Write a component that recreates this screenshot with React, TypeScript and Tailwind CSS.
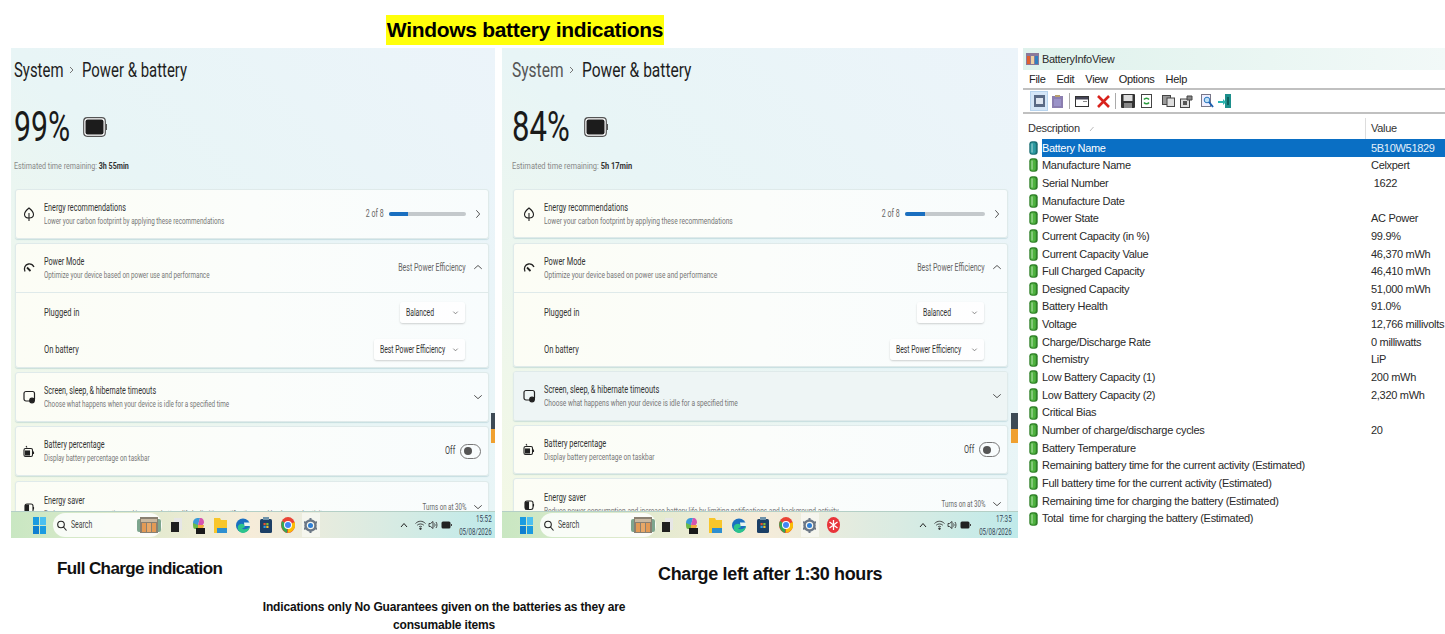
import type { ReactNode } from "react";

const face = "font-['Roboto',sans-serif]";

const infoRows: [string, string][] = [
  ["Battery Name", "5B10W51829"],
  ["Manufacture Name", "Celxpert"],
  ["Serial Number", "\u00a01622"],
  ["Manufacture Date", ""],
  ["Power State", "AC Power"],
  ["Current Capacity (in %)", "99.9%"],
  ["Current Capacity Value", "46,370 mWh"],
  ["Full Charged Capacity", "46,410 mWh"],
  ["Designed Capacity", "51,000 mWh"],
  ["Battery Health", "91.0%"],
  ["Voltage", "12,766 millivolts"],
  ["Charge/Discharge Rate", "0 milliwatts"],
  ["Chemistry", "LiP"],
  ["Low Battery Capacity (1)", "200 mWh"],
  ["Low Battery Capacity (2)", "2,320 mWh"],
  ["Critical Bias", ""],
  ["Number of charge/discharge cycles", "20"],
  ["Battery Temperature", ""],
  ["Remaining battery time for the current activity (Estimated)", ""],
  ["Full battery time for the current activity (Estimated)", ""],
  ["Remaining time for charging the battery (Estimated)", ""],
  ["Total  time for charging the battery (Estimated)", ""],
];

/* the source screenshot is squashed sideways, so text is squeezed to match */
function Sq({ k, right, className = "", children }: { k: string; right?: boolean; className?: string; children: ReactNode }) {
  return (
    <span className={`${face} inline-block whitespace-nowrap ${right ? "origin-right" : "origin-left"} ${k} ${className}`}>
      {children}
    </span>
  );
}

function Chevron({ dir }: { dir: "up" | "down" | "right" }) {
  const d = dir === "up" ? "M1.5 7l4.5-4 4.5 4" : dir === "down" ? "M1.5 4l4.5 4 4.5-4" : "M4 1.5l4 4.5-4 4.5";
  return (
    <svg className="w-[10px] h-[10px] text-[#555]" viewBox="0 0 12 12" fill="none" stroke="currentColor" strokeWidth={1.2}>
      <path d={d} />
    </svg>
  );
}

function BigBattery() {
  return (
    <svg className="w-[24px] h-[20px]" viewBox="0 0 24 20">
      <rect x="0.700" y="0.700" width="21.600" height="18.600" rx="3.500" fill="#fff" stroke="#555" strokeWidth="1.200" />
      <rect x="2.500" y="2.500" width="18" height="15" rx="2" fill="#1c1c1c" />
      <rect x="22.800" y="7" width="1.200" height="6" fill="#555" />
    </svg>
  );
}

function LeafIcon() {
  return (
    <svg className="w-[12px] h-[14px]" viewBox="0 0 12 14" fill="none" stroke="#222" strokeWidth="1.1">
      <path d="M6 1C8.500 3 10.500 5 10.500 7.500C10.500 10 8.500 11 6 11C3.500 11 1.500 10 1.500 7.500C1.500 5 3.500 3 6 1Z" />
      <path d="M6 6v8" />
    </svg>
  );
}

function GaugeIcon() {
  return (
    <svg className="w-[12px] h-[12px]" viewBox="0 0 12 12" fill="none" stroke="#222" strokeWidth="1.3">
      <path d="M2 9.500C.5 6.500 2 2.500 5.500 2C8 1.700 10 3 11 5" />
      <path d="M4 5.500l3.500 3.500" strokeWidth="1.800" />
    </svg>
  );
}

function ScreenIcon() {
  return (
    <svg className="w-[13px] h-[14px]" viewBox="0 0 13 14" fill="none" stroke="#222" strokeWidth="1.2">
      <rect x="1" y="1.500" width="10.500" height="9.500" rx="2" />
      <circle cx="9" cy="10.500" r="2.300" fill="#222" />
    </svg>
  );
}

function PercentIcon() {
  return (
    <svg className="w-[12px] h-[13px]" viewBox="0 0 12 13" fill="none" stroke="#222" strokeWidth="1.100">
      <rect x="1" y="3.500" width="8.500" height="8" rx="1.500" />
      <rect x="2.500" y="6" width="4" height="4" fill="#222" />
      <path d="M3 1l1 1.500M10.500 6.500v2.500" />
    </svg>
  );
}

function SaverIcon() {
  return (
    <svg className="w-[12px] h-[13px]" viewBox="0 0 12 13" fill="none" stroke="#222" strokeWidth="1.100">
      <rect x="2" y="3" width="8" height="8.500" rx="2" />
      <path d="M2.500 4h3v7h-3z" fill="#222" />
      <path d="M10.500 6v2.500" />
    </svg>
  );
}

function Row({ icon, title, sub, right, h, second, tint }: { icon: ReactNode; title: string; sub: string; right: ReactNode; h: string; second?: boolean; tint?: boolean }) {
  return (
    <div className={`flex items-center pr-[4px] ${second ? "pl-[5px]" : "pl-[3px]"} ${h} ${tint ? "bg-[#eef5f5]" : ""}`}>
      <div className="w-[20px] flex justify-center shrink-0">{icon}</div>
      <div className="ml-[5px] flex-1 min-w-0 overflow-hidden">
        <p className="h-[14px] text-[10px] leading-[14px] text-[#333]">
          <Sq k={second ? "scale-x-[0.74]" : "scale-x-[0.72]"}>{title}</Sq>
        </p>
        <p className="h-[12px] text-[8.500px] leading-[12px] text-[#777]">
          <Sq k={second ? "scale-x-[0.775]" : "scale-x-[0.74]"}>{sub}</Sq>
        </p>
      </div>
      <div className="flex items-center shrink-0">{right}</div>
    </div>
  );
}

function ChevBox({ dir }: { dir: "up" | "down" | "right" }) {
  return (
    <span className="w-[12px] ml-[6px] flex justify-center">
      <Chevron dir={dir} />
    </span>
  );
}

function Dropdown({ label, w }: { label: string; w: string }) {
  return (
    <div className={`flex items-center h-[21px] pl-[6px] pr-[6px] rounded-[3px] bg-white/80 shadow-[0_1px_2px_rgba(0,0,0,0.18)] ${w}`}>
      <span className="flex-1 w-0 text-[10px] text-[#333]">
        <Sq k="scale-x-[0.68]">{label}</Sq>
      </span>
      <svg className="w-[7px] h-[7px] shrink-0" viewBox="0 0 8 8" fill="none" stroke="#777" strokeWidth="1">
        <path d="M1.500 3l2.500 2.500L6.500 3" />
      </svg>
    </div>
  );
}

function SubRow({ label, children, second }: { label: string; children: ReactNode; second?: boolean }) {
  return (
    <div className={`h-[21px] flex items-center justify-between pr-[23px] ${second ? "pl-[30px]" : "pl-[28px]"}`}>
      <span className="text-[10.500px] text-[#333]">
        <Sq k="scale-x-[0.72]">{label}</Sq>
      </span>
      {children}
    </div>
  );
}

function Card({ children, className = "" }: { children: ReactNode; className?: string }) {
  return (
    <div className={`rounded-[3px] overflow-hidden bg-linear-to-r from-[#fcfdf5] via-[#fbfdfb] to-[#f8fcfd] border border-[#dfeaea] shadow-[0_1px_1px_rgba(120,170,180,0.3)] ${className}`}>
      {children}
    </div>
  );
}

/* taskbar glyphs */
function WinLogo() {
  return (
    <svg className="w-[13px] h-[17px] shrink-0" viewBox="0 0 13 17">
      <rect x="0" y="0" width="6" height="8" fill="#1b9be0" />
      <rect x="7" y="0" width="6" height="8" fill="#4cc0f0" />
      <rect x="0" y="9" width="6" height="8" fill="#0f7fd0" />
      <rect x="7" y="9" width="6" height="8" fill="#1b9be0" />
    </svg>
  );
}

function PicIcon() {
  return (
    <svg className="w-[24px] h-[18px]" viewBox="0 0 24 18">
      <rect x="0" y="3" width="24" height="13" rx="2" fill="#7da58e" />
      <rect x="3" y="1" width="18" height="16" fill="#8a8071" />
      <rect x="4" y="3" width="16" height="3" fill="#c9b8a0" />
      <rect x="5" y="7" width="4" height="9" fill="#e39a55" />
      <rect x="10" y="7" width="4" height="9" fill="#e8a868" />
      <rect x="15" y="7" width="4" height="9" fill="#e39a55" />
    </svg>
  );
}

function BookIcon() {
  return (
    <svg className="w-[11px] h-[14px]" viewBox="0 0 11 14">
      <rect x="3" y="0" width="8" height="12" fill="#e6e6e6" />
      <rect x="0" y="4" width="8" height="10" fill="#1f1f1f" />
    </svg>
  );
}

function CopilotIcon() {
  return (
    <svg className="w-[13px] h-[17px]" viewBox="0 0 13 17">
      <path d="M1 6C1 2 4 1 6 1L8 1L6 8H1Z" fill="#3a9ad9" />
      <path d="M8 1c3 0 4 2 4 5L10 9 6 8Z" fill="#d553b0" />
      <path d="M1 6l5 2v4H3C1 12 1 9 1 6Z" fill="#6ab94a" />
      <path d="M6 8h6c0 2-1 4-3 4H6Z" fill="#f2a93b" />
      <rect x="4" y="11" width="9" height="6" fill="#1a1a1a" />
    </svg>
  );
}

function FolderIcon() {
  return (
    <svg className="w-[13px] h-[15px]" viewBox="0 0 13 15">
      <path d="M0 0h6l1 2h6v13H0Z" fill="#f8c62a" />
      <rect x="3" y="10" width="10" height="5" fill="#2e8fd0" />
    </svg>
  );
}

function EdgeIcon() {
  return (
    <svg className="w-[14px] h-[15px]" viewBox="0 0 14 15">
      <circle cx="7" cy="7.500" r="7" fill="#1b6fc0" />
      <path d="M14 8C14 11 11 15 7 15C3 15 1 11 2 8C4 5 8 5 9 8C9 10 7 10 6 10C7 12 12 12 14 8Z" fill="#2cc48c" />
      <path d="M8 4.500h6v3.500H8.500Z" fill="#e8f5f0" />
    </svg>
  );
}

function StoreIcon() {
  return (
    <svg className="w-[12px] h-[16px]" viewBox="0 0 12 16">
      <rect x="0" y="2" width="12" height="14" rx="1.500" fill="#1c3f66" />
      <rect x="3" y="0" width="6" height="3" fill="#6f93aa" />
      <rect x="3.500" y="6" width="2.200" height="2.200" fill="#e8532a" />
      <rect x="6.300" y="6" width="2.200" height="2.200" fill="#7cbf3c" />
      <rect x="3.500" y="8.800" width="2.200" height="2.200" fill="#2f9fe0" />
      <rect x="6.300" y="8.800" width="2.200" height="2.200" fill="#f6bd2a" />
    </svg>
  );
}

function ChromeIcon() {
  return (
    <svg className="w-[14px] h-[16px]" viewBox="0 0 14 16">
      <ellipse cx="7" cy="8" rx="7" ry="8" fill="#ea4335" />
      <path d="M7 8L1 4C-1 8 1 14 6 16Z" fill="#34a853" />
      <path d="M7 8l7-3c1 4 0 9-7 11Z" fill="#fbbc05" />
      <circle cx="7" cy="8" r="4" fill="#fff" />
      <circle cx="7" cy="8" r="3" fill="#4285f4" />
    </svg>
  );
}

function GearIcon() {
  return (
    <span className="w-[18px] h-[24px] bg-white/50 flex items-center justify-center">
      <svg className="w-[13px] h-[15px]" viewBox="0 0 13 15">
        <circle cx="6.500" cy="7.500" r="5" fill="none" stroke="#6b7785" strokeWidth="2.500" />
        <path d="M6.500 0v2.500M6.500 12.500V15M0 4l2.200 1.200M10.800 9.800L13 11M0 11l2.200-1.200M10.800 5.200L13 4" stroke="#6b7785" strokeWidth="2" />
        <circle cx="6.500" cy="7.500" r="2.500" fill="#2f7fd6" />
      </svg>
    </span>
  );
}

function RedIcon() {
  return (
    <svg className="w-[13px] h-[16px]" viewBox="0 0 13 16">
      <ellipse cx="6.500" cy="8" rx="6.500" ry="8" fill="#e8343a" />
      <path d="M6.500 3v10M2.500 5l8 6M2.500 11l8-6" stroke="#fff" strokeWidth="1.300" />
    </svg>
  );
}

function TaskSlot({ children, w }: { children: ReactNode; w: string }) {
  return <span className={`h-[26px] flex items-center justify-center shrink-0 ${w}`}>{children}</span>;
}

function Taskbar({ time, second }: { time: string; second?: boolean }) {
  const w = second ? "w-[23.700px]" : "w-[22.400px]";
  return (
    <div className={`h-[27px] flex items-center border-t border-[#b4cfc6] bg-linear-to-r from-[#c9e7c2] via-[#f6ecd9] to-[#bfeaea] ${second ? "pl-[18px] pr-[6px]" : "pl-[22px] pr-[3px]"}`}>
      <WinLogo />
      <div className={`ml-[7px] h-[24px] rounded-full bg-white/85 flex items-center pl-[4px] ${second ? "w-[116px]" : "w-[109px]"}`}>
        <svg className="w-[10px] h-[11px]" viewBox="0 0 10 11" fill="none" stroke="#222" strokeWidth="1.100">
          <circle cx="4" cy="4.500" r="3.300" />
          <path d="M6.500 7l3 3.500" />
        </svg>
        <span className="ml-[4px] w-[21px] text-[10.500px] text-[#444]">
          <Sq k="scale-x-[0.66]">Search</Sq>
        </span>
        <span className="ml-auto mr-[1px]">
          <PicIcon />
        </span>
      </div>
      <div className={`flex items-center ${second ? "ml-0" : "ml-[3px]"}`}>
        <TaskSlot w={w}><BookIcon /></TaskSlot>
        <TaskSlot w={w}><CopilotIcon /></TaskSlot>
        <TaskSlot w={w}><FolderIcon /></TaskSlot>
        <TaskSlot w={w}><EdgeIcon /></TaskSlot>
        <TaskSlot w={w}><StoreIcon /></TaskSlot>
        <TaskSlot w={w}><ChromeIcon /></TaskSlot>
        <TaskSlot w={w}><GearIcon /></TaskSlot>
        {second && <TaskSlot w={w}><RedIcon /></TaskSlot>}
      </div>
      <div className="ml-auto flex items-center gap-[2px]">
        <svg className="w-[8px] h-[6px]" viewBox="0 0 8 6" fill="none" stroke="#222" strokeWidth="1"><path d="M1 5l3-3.500L7 5" /></svg>
        <svg className="ml-[5px] w-[11px] h-[10px]" viewBox="0 0 11 10" fill="none" stroke="#333" strokeWidth="0.900">
          <path d="M.5 3.500C3.500 .5 7.500 .5 10.500 3.500M2.200 5.200C4 3.500 7 3.500 8.800 5.200M4 7C5 6 6 6 7 7" />
          <circle cx="5.500" cy="8.700" r=".8" fill="#333" />
        </svg>
        <svg className="w-[10px] h-[10px]" viewBox="0 0 10 10" fill="none" stroke="#333" strokeWidth="0.900">
          <path d="M1 3.500h1.500L5 1.500v7L2.500 6.500H1ZM6.500 3.500c.7 1 .7 2 0 3M8 2c1.300 2 1.300 4 0 6" />
        </svg>
        <svg className="ml-[1px] w-[11px] h-[8px]" viewBox="0 0 11 8">
          <rect x=".5" y=".5" width="9" height="7" rx="1.500" fill="#222" />
          <rect x="10" y="3" width="1" height="2" fill="#444" />
        </svg>
        <div className={`w-[32px] flex flex-col items-end text-[9.500px] leading-[13px] text-[#345] ${second ? "ml-[7px]" : "ml-[6px]"}`}>
          <Sq right k="scale-x-[0.66]">{time}</Sq>
          <Sq right k="scale-x-[0.64]">05/08/2026</Sq>
        </div>
      </div>
    </div>
  );
}

function SettingsPanel({ percent, remaining, time, second }: { percent: string; remaining: string; time: string; second?: boolean }) {
  const head = second ? "scale-x-[0.74]" : "scale-x-[0.71]";
  const rightK = "scale-x-[0.67]";
  return (
    <section className={`relative flex flex-col shrink-0 h-[490px] overflow-hidden bg-linear-to-tr from-[#f3f8e4] via-[#e8f5f6] to-[#ecf4fa] ${second ? "w-[516px]" : "w-[484px]"}`}>
      <div className="h-[463px] overflow-hidden">
        <div className={`pt-[9px] ${second ? "pl-[10px]" : "pl-[3px]"}`}>
          <div className="flex items-center h-[26px]">
            <span className={`text-[21px] ${second ? "w-[49px] text-[#555]" : "w-[47px] text-[#1e1e1e]"}`}>
              <Sq k={head}>System</Sq>
            </span>
            <svg className="mx-[7px] w-[7px] h-[8px]" viewBox="0 0 7 8" fill="none" stroke="#777" strokeWidth="1"><path d="M2 1l3 3-3 3" /></svg>
            <span className="text-[21px] text-[#1e1e1e]">
              <Sq k={head}>Power &amp; battery</Sq>
            </span>
          </div>
          <div className="mt-[24px] flex items-center h-[40px]">
            <span className={`text-[42px] leading-[40px] text-[#1a1a1a] ${second ? "w-[58px]" : "w-[57px]"}`}>
              <Sq k={second ? "scale-x-[0.74]" : "scale-x-[0.72]"}>{percent}</Sq>
            </span>
            <span className={second ? "ml-[14px]" : "ml-[12px]"}><BigBattery /></span>
          </div>
          <p className="mt-[13px] h-[12px] text-[9.500px] leading-[12px] text-[#888]">
            <Sq k={second ? "scale-x-[0.785]" : "scale-x-[0.75]"}>
              Estimated time remaining: <b className="text-[#333]">{remaining}</b>
            </Sq>
          </p>
        </div>
        <div className={`mt-[17px] flex flex-col gap-[4px] ${second ? "pl-[11px] pr-[10px]" : "pl-[4px] pr-[6px]"}`}>
          <Card>
            <Row
              second={second}
              h={second ? "h-[47px]" : "h-[48px]"}
              icon={<LeafIcon />}
              title="Energy recommendations"
              sub="Lower your carbon footprint by applying these recommendations"
              right={
                <>
                  <span className="text-[10.500px] text-[#666]"><Sq right k={rightK}>2 of 8</Sq></span>
                  <span className={`ml-[5px] h-[4px] rounded-full bg-[#c4c9cc] overflow-hidden ${second ? "w-[80px]" : "w-[77px]"}`}>
                    <span className="block h-full w-[25%] bg-[#1a6fc0]" />
                  </span>
                  <ChevBox dir="right" />
                </>
              }
            />
          </Card>
          <Card className={second ? "mt-[1px]" : ""}>
            <Row
              second={second}
              h="h-[48px]"
              icon={<GaugeIcon />}
              title="Power Mode"
              sub="Optimize your device based on power use and performance"
              right={
                <>
                  <span className="text-[10.500px] text-[#666]"><Sq right k={rightK}>Best Power Efficiency</Sq></span>
                  <ChevBox dir="up" />
                </>
              }
            />
            <div className={`border-t border-[#dfeaea] pt-[9px] flex flex-col gap-[16px] ${second ? "h-[74px]" : "h-[75px]"}`}>
              <SubRow second={second} label="Plugged in">
                <Dropdown label="Balanced" w={second ? "w-[67px]" : "w-[65px]"} />
              </SubRow>
              <SubRow second={second} label="On battery">
                <Dropdown label="Best Power Efficiency" w={second ? "w-[94px]" : "w-[91px]"} />
              </SubRow>
            </div>
          </Card>
          <Card>
            <Row
              second={second}
              h="h-[48px]"
              tint={second}
              icon={<ScreenIcon />}
              title="Screen, sleep, & hibernate timeouts"
              sub="Choose what happens when your device is idle for a specified time"
              right={<ChevBox dir="down" />}
            />
          </Card>
          <Card>
            <Row
              second={second}
              h={second ? "h-[47px]" : "h-[48px]"}
              icon={<PercentIcon />}
              title="Battery percentage"
              sub="Display battery percentage on taskbar"
              right={
                <>
                  <span className="text-[11px] text-[#444]"><Sq right k={rightK}>Off</Sq></span>
                  <span className="ml-[5px] mr-[3px] w-[21px] h-[15px] rounded-full border border-[#777] flex items-center pl-[3px]">
                    <span className="w-[8px] h-[8px] rounded-full bg-[#555]" />
                  </span>
                </>
              }
            />
          </Card>
          <Card className={second ? "" : "mt-[1px]"}>
            <Row
              second={second}
              h="h-[50px]"
              icon={<SaverIcon />}
              title="Energy saver"
              sub="Reduce power consumption and increase battery life by limiting notifications and background activity"
              right={
                <>
                  <span className="text-[9.500px] text-[#666]"><Sq right k="scale-x-[0.65]">Turns on at 30%</Sq></span>
                  <ChevBox dir="down" />
                </>
              }
            />
          </Card>
        </div>
      </div>
      <Taskbar time={time} second={second} />
      {/* sliver of another window on the right edge */}
      <div className={`absolute top-[365px] right-0 h-[30px] flex flex-col ${second ? "w-[7px]" : "w-[4px]"}`}>
        <div className="h-[16px] bg-[#3d4a55]" />
        <div className="h-[14px] bg-[#f0a030]" />
      </div>
    </section>
  );
}

function CellIcon({ teal }: { teal?: boolean }) {
  return (
    <svg className="w-[9px] h-[14px] shrink-0" viewBox="0 0 9 14">
      <rect x="0.300" y="0.300" width="8.400" height="13.400" rx="3" fill={teal ? "#1a6d72" : "#2f7f28"} />
      <rect x="1.300" y="1.500" width="5.500" height="11.200" rx="2" fill={teal ? "#2c9aa0" : "#4fb33f"} />
      <rect x="2.300" y="2.500" width="1.500" height="9" fill="#fff" opacity="0.400" />
    </svg>
  );
}

function ToolIcon({ children, active }: { children: ReactNode; active?: boolean }) {
  return (
    <span className={`w-[18px] h-[20px] flex items-center justify-center shrink-0 ${active ? "bg-[#d5e6f7] border border-[#b8d4ee]" : ""}`}>
      {children}
    </span>
  );
}

function InfoPanel() {
  return (
    <section className="flex-1 min-w-0 h-[490px] overflow-hidden bg-white font-['Liberation_Sans',sans-serif] text-[11px] tracking-[-0.3px] text-[#2a2a2a]">
      <div className="h-[22px] flex items-center pl-[3px] bg-linear-to-r from-[#dff2ec] to-[#f2f9f8]">
        <svg className="w-[13px] h-[12px]" viewBox="0 0 13 12">
          <rect width="13" height="12" fill="#8a7a9a" />
          <rect x="1" y="3" width="3" height="8" fill="#e06030" />
          <rect x="5" y="3" width="3" height="8" fill="#f0d0a0" />
          <rect x="9" y="3" width="3" height="8" fill="#3080c0" />
        </svg>
        <span className="ml-[3px]">BatteryInfoView</span>
      </div>
      <div className="h-[18px] flex items-center pl-[6px] gap-[11px] text-[#222]">
        <span>File</span>
        <span>Edit</span>
        <span>View</span>
        <span>Options</span>
        <span>Help</span>
      </div>
      <div className="h-[26px] flex items-center pl-[7px] border-t-2 border-b-2 border-[#c0c0c0]">
        <ToolIcon active>
          <svg className="w-[11px] h-[12px]" viewBox="0 0 11 12"><rect width="11" height="12" fill="#5a6a85" /><rect x="2" y="3" width="7" height="6" fill="#dfe6f0" /></svg>
        </ToolIcon>
        <ToolIcon>
          <svg className="w-[11px] h-[13px]" viewBox="0 0 11 13"><rect y="1" width="11" height="12" fill="#8b7eb0" /><rect x="3" y="0" width="5" height="2" fill="#b8a070" /><rect x="2" y="4" width="7" height="7" fill="#9a92c8" /></svg>
        </ToolIcon>
        <span className="mx-[3px] w-px h-[16px] bg-[#aaa]" />
        <ToolIcon>
          <svg className="w-[14px] h-[11px]" viewBox="0 0 14 11"><rect x=".5" y=".5" width="13" height="10" fill="#fff" stroke="#333" /><rect x="1" y="1" width="12" height="2.500" fill="#445" /><rect x="8" y="5" width="4" height="1" fill="#888" /></svg>
        </ToolIcon>
        <span className="ml-[3px]">
          <ToolIcon>
            <svg className="w-[13px] h-[13px]" viewBox="0 0 13 13" fill="none" stroke="#d8221c" strokeWidth="2.600"><path d="M1 1l11 11M12 1L1 12" /></svg>
          </ToolIcon>
        </span>
        <span className="mx-[3px] w-px h-[16px] bg-[#aaa]" />
        <ToolIcon>
          <svg className="w-[14px] h-[14px]" viewBox="0 0 14 14"><rect width="14" height="14" rx="1" fill="#333" /><rect x="2.500" y="1" width="9" height="6" fill="#ddd" /><rect x="3" y="9" width="8" height="5" fill="#888" /></svg>
        </ToolIcon>
        <ToolIcon>
          <svg className="w-[11px] h-[14px]" viewBox="0 0 11 14"><rect x=".5" y=".5" width="10" height="13" fill="#fff" stroke="#444" /><path d="M3 5.500a3 3 0 0 1 5 0M8 8.500a3 3 0 0 1-5 0" fill="none" stroke="#2a9a3c" strokeWidth="1.500" /></svg>
        </ToolIcon>
        <span className="ml-[4px]">
          <ToolIcon>
            <svg className="w-[13px] h-[12px]" viewBox="0 0 13 12"><rect x=".5" y=".5" width="8" height="9" fill="#999" stroke="#444" /><rect x="5" y="3" width="7.500" height="8.500" fill="#ddd" stroke="#444" /></svg>
          </ToolIcon>
        </span>
        <ToolIcon>
          <svg className="w-[13px] h-[13px]" viewBox="0 0 13 13"><rect x=".5" y="4" width="9" height="8.500" fill="#ddd" stroke="#444" /><rect x="3" y="6" width="4" height="4" fill="#555" /><path d="M7 1h5v4H7Z" fill="#888" stroke="#444" /></svg>
        </ToolIcon>
        <span className="ml-[3px]">
          <ToolIcon>
            <svg className="w-[13px] h-[14px]" viewBox="0 0 13 14" fill="none"><rect x=".5" y=".5" width="9" height="12" fill="#eef" stroke="#778" /><circle cx="6" cy="6" r="2.800" fill="#bfe0f5" stroke="#2a78c0" /><path d="M8 8l4 5" stroke="#1c5fb0" strokeWidth="2" /></svg>
          </ToolIcon>
        </span>
        <ToolIcon>
          <svg className="w-[14px] h-[14px]" viewBox="0 0 14 14"><path d="M7 0h6v14H7Z" fill="#1d8f8c" /><path d="M0 7h5V5l3 3-3 3V9H0Z" fill="#2ab5b0" /><rect x="9" y="3" width="2" height="8" fill="#0c5f5c" /></svg>
        </ToolIcon>
      </div>
      <div className="mt-[4px] h-[21px] flex items-center text-[#333]">
        <div className="w-[342px] pl-[5px] flex items-center">
          Description
          <svg className="ml-[9px] w-[6px] h-[6px]" viewBox="0 0 6 6" fill="none" stroke="#aaa" strokeWidth="0.800"><path d="M1 5L4.500 1" /></svg>
        </div>
        <div className="h-full border-l border-[#ddd] pl-[5px] flex items-center">Value</div>
      </div>
      <div>
        {infoRows.map(([name, value], i) => (
          <div key={name} className="h-[17.670px] flex items-center pl-[6px]">
            <CellIcon teal={i === 0} />
            <div className={`flex items-center flex-1 h-full ml-[4px] whitespace-pre ${i === 0 ? "bg-[#0a6fc4] text-white" : ""}`}>
              <span className="w-[329px] shrink-0">{name}</span>
              <span className={i === 0 ? "text-[#e4effa]" : ""}>{value}</span>
            </div>
          </div>
        ))}
      </div>
    </section>
  );
}

export default function App() {
  return (
    <div className="w-[1445px] h-[634px] overflow-hidden bg-white font-['Liberation_Sans',sans-serif]">
      <div className="pt-[15px] pl-[386px]">
        <h1 className="w-[278px] h-[30px] bg-[#ffff0a] text-center text-[21px] leading-[30px] font-bold text-black tracking-[-0.3px] whitespace-nowrap">
          Windows battery indications
        </h1>
      </div>
      <div className="mt-[3px] flex items-start pl-[11px]">
        <SettingsPanel percent="99%" remaining="3h 55min" time="15:52" />
        <div className="w-[7px] shrink-0" />
        <SettingsPanel second percent="84%" remaining="5h 17min" time="17:35" />
        <div className="w-[5px] shrink-0" />
        <InfoPanel />
      </div>
      <div className="flex items-start">
        <p className="ml-[57px] mt-[20px] w-[600px] shrink-0 text-[17px] leading-[22px] font-bold text-[#111] tracking-[-0.6px]">Full Charge indication</p>
        <p className="ml-[1px] mt-[25px] text-[18px] leading-[22px] font-bold text-[#111] tracking-[-0.35px]">Charge left after 1:30 hours</p>
      </div>
      <div className="ml-[244px] w-[400px] pt-[13px] text-center text-[12px] leading-[18px] font-bold text-[#111] tracking-[-0.17px]">
        <p>Indications only No Guarantees given on the batteries as they are</p>
        <p>consumable items</p>
      </div>
    </div>
  );
}
